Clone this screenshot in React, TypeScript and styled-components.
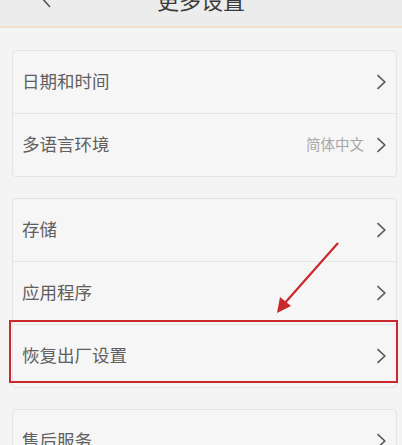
import React from "react";
import styled, { createGlobalStyle } from "styled-components";

const Global = createGlobalStyle`
  html, body { margin: 0; padding: 0; background: #f4f4f4; }
  body { font-family: "Noto Sans CJK SC", "Noto Sans", sans-serif; }
  #root { width: 402px; height: 445px; overflow: hidden; }
`;

const Page = styled.div`
  position: relative;
  width: 402px;
  height: 445px;
  overflow: hidden;
  background: #f4f4f4;
`;

const Header = styled.header`
  position: relative;
  height: 26px;
  background: #ececec;
  border-bottom: 2px solid #f1dfcf;
  display: flex;
  align-items: flex-end;
  justify-content: center;
  padding-bottom: 16px;
  box-sizing: content-box;
  margin-top: -16px;
  overflow: hidden;
`;

const Title = styled.div`
  font-size: 22px;
  line-height: 22px;
  color: #3a3a3a;
`;

const Back = styled.svg`
  position: absolute;
  left: 38px;
  bottom: 18px;
`;

const Content = styled.div`
  display: flex;
  flex-direction: column;
  gap: 21px;
  padding: 22px 5px 0 12px;
`;

const Card = styled.div`
  background: #f6f6f6;
  border: 1px solid #e4e4e4;
  border-radius: 4px;
  overflow: hidden;
`;

const Row = styled.div<{ $last?: boolean }>`
  height: 62px;
  display: flex;
  align-items: center;
  padding: 0 10px 0 9px;
  border-bottom: ${(p) => (p.$last ? "none" : "1px solid #e6e6e6")};
`;

const Label = styled.div`
  flex: 1;
  font-size: 17.5px;
  line-height: 20px;
  color: #606060;
  margin-top: -2px;
`;

const Value = styled.div`
  font-size: 14.5px;
  line-height: 18px;
  color: #a8a8a8;
  margin-right: 12px;
  margin-top: -2px;
`;

const Highlight = styled.div`
  position: absolute;
  left: 9px;
  top: 320px;
  width: 389px;
  height: 63px;
  border: 2px solid #c9292d;
  box-sizing: border-box;
  pointer-events: none;
`;

const Arrow = styled.svg`
  position: absolute;
  left: 0;
  top: 0;
  pointer-events: none;
`;

const Chevron = () => (
  <svg width="10" height="16" viewBox="0 0 10 16">
    <path d="M1.5 1.2 L8.8 8 L1.5 14.8" fill="none" stroke="#5a5a5a" strokeWidth="1.6" />
  </svg>
);

type Item = { label: string; value?: string };

const groups: Item[][] = [
  [{ label: "日期和时间" }, { label: "多语言环境", value: "简体中文" }],
  [{ label: "存储" }, { label: "应用程序" }, { label: "恢复出厂设置" }],
  [{ label: "售后服务" }],
];

export default function App() {
  return (
    <Page>
      <Global />
      <Header>
        <Back width="14" height="22" viewBox="0 0 14 22">
          <path d="M12 1 L3 11 L12 21" fill="none" stroke="#555" strokeWidth="1.6" />
        </Back>
        <Title>更多设置</Title>
      </Header>
      <Content>
        {groups.map((g, gi) => (
          <Card key={gi}>
            {g.map((it, i) => (
              <Row key={it.label} $last={i === g.length - 1}>
                <Label>{it.label}</Label>
                {it.value && <Value>{it.value}</Value>}
                <Chevron />
              </Row>
            ))}
          </Card>
        ))}
      </Content>
      <Highlight />
      <Arrow width="402" height="445" viewBox="0 0 402 445">
        <line x1="338" y1="243" x2="284" y2="304" stroke="#c9292d" strokeWidth="2.2" />
        <path d="M277 313 L280 297 L291 306 Z" fill="#c9292d" />
      </Arrow>
    </Page>
  );
}
